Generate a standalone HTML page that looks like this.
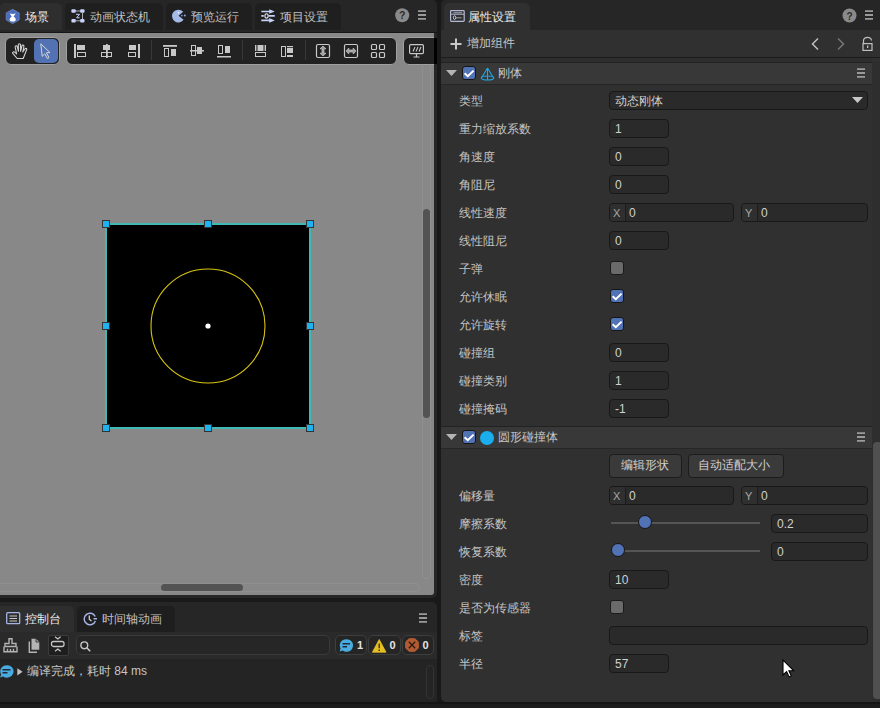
<!DOCTYPE html>
<html><head><meta charset="utf-8">
<style>
*{box-sizing:border-box;margin:0;padding:0}
html,body{width:880px;height:708px;overflow:hidden;background:#191919;font-family:"Liberation Sans",sans-serif;font-size:12px;line-height:14px;color:#c8c8c8}
.a{position:absolute}
svg{position:absolute;overflow:visible}
#lp{left:0;top:0;width:437px;height:598px;background:#262626;border-radius:0 5px 5px 0;overflow:hidden}
.tab{position:absolute;top:3px;height:27px;background:#1f1f1f;border-radius:5px 5px 0 0}
.tab.act{background:#2e2e2e}
.tt{position:absolute;color:#c0c0c0;white-space:nowrap}
.tt.act{color:#ececec}
#scene{left:0;top:33px;width:434px;height:562px;background:#888;border-radius:0 0 3px 0;overflow:hidden}
.tb{position:absolute;top:4px;height:28px;background:#222;border:1px solid #a0a0a0;border-radius:6px}
#cp{left:0;top:602px;width:437px;height:100px;background:#262626;border-radius:0 5px 0 0;overflow:hidden}
#rp{left:441px;top:0;width:439px;height:702px;background:#303030;border-radius:5px 0 0 5px;overflow:hidden}
.lbl{position:absolute;left:18px;color:#c4c4c4;white-space:nowrap}
.inp{position:absolute;background:#2a2a2a;border:1px solid #181818;border-radius:4px}
.val{position:absolute;color:#d0d0d0;white-space:nowrap}
.hdr{position:absolute;left:0;width:431px;height:23px;background:#383838;border-top:1px solid #222;border-bottom:1px solid #262626}
.chk{position:absolute;width:14px;height:14px;background:#5272b6;border:1px solid #151515;border-radius:3px}
.chk0{position:absolute;width:14px;height:14px;background:#6a6a6a;border:1px solid #1a1a1a;border-radius:3px}
.btn{background:#3a3a3a;border:1px solid #1c1c1c;border-radius:4px}
.ax{color:#a8a8a8;font-size:11px}
</style></head><body>
<div class="a" style="left:0;top:702px;width:880px;height:6px;background:#1c1c1c"></div>
<div class="a" style="left:0;top:702px;width:880px;height:2px;background:#151515"></div>
<!-- LEFT SCENE PANEL -->
<div id="lp" class="a">
  <div class="a" style="left:0;top:0;width:437px;height:32px;background:#262626"></div>
  <div class="tab act" style="left:0;width:62px"></div>
  <div class="tab" style="left:65px;width:98px"></div>
  <div class="tab" style="left:166px;width:86px"></div>
  <div class="tab" style="left:255px;width:86px"></div>
  <div class="a" style="left:0;top:32px;width:437px;height:1px;background:#161616"></div>
  <svg style="left:6px;top:8.5px" width="14" height="15"><path d="M6.7 0.3L13.2 3.9V11L6.7 14.6L0.2 11V3.9Z" fill="#4a6cc0" stroke="#8294c8" stroke-width="0.6"/><path d="M3.6 4.6Q6.7 5.2 9.8 4.6L7.6 7.4Q9.8 8.6 9.8 10.5Q9.8 12.6 6.7 12.6Q3.6 12.6 3.6 10.5Q3.6 8.6 5.8 7.4Z" fill="#fff"/></svg>
  <svg style="left:71px;top:9px" width="14" height="14"><g fill="#c8d2fa"><rect x="0.4" y="0.2" width="4.4" height="3.6" rx="1"/><rect x="9.1" y="0.2" width="4.4" height="3.6" rx="1"/><rect x="0.4" y="10" width="4.4" height="3.6" rx="1"/><rect x="9.1" y="10" width="4.4" height="3.6" rx="1"/></g><path d="M4.8 2H9.1M4.8 11.8H9.1M11.5 3.8V10" stroke="#b8bcc8" stroke-width="0.9"/><path d="M5 5.3H8.6L5.6 8.8H8.6" stroke="#c8d2fa" stroke-width="1" fill="none"/></svg>
  <svg style="left:172px;top:9px" width="14" height="14"><path d="M11.2 2.8A6.4 6.4 0 1 0 11.6 10.8L6.6 6.8Z" fill="#a4bae8"/><circle cx="6.5" cy="3.6" r="0.9" fill="#eef"/><circle cx="9.8" cy="6.6" r="0.9" fill="#7898e0"/><circle cx="12.8" cy="6.6" r="1" fill="#90a8e8"/></svg>
  <svg style="left:261px;top:9px" width="14" height="14"><g stroke="#c4d2f8" stroke-width="1.6" fill="none"><path d="M0.3 2.5H9M0.3 11.4H9M7.5 6.9H13.8M0.3 6.9H2.8"/></g><path d="M8.2 0.2L13.8 2.5L8.2 4.8ZM8.2 9.1L13.8 11.4L8.2 13.7Z" fill="#c4d2f8"/><ellipse cx="5.5" cy="6.9" rx="1.6" ry="2.2" fill="none" stroke="#e0e4f0" stroke-width="1.1"/></svg>
  <div class="tt act" style="left:25px;top:10px">场景</div>
  <div class="tt" style="left:90px;top:10px">动画状态机</div>
  <div class="tt" style="left:191px;top:10px">预览运行</div>
  <div class="tt" style="left:280px;top:10px">项目设置</div>
  <svg style="left:395px;top:8px" width="15" height="15"><circle cx="7.2" cy="7.2" r="7" fill="#8a8a8a"/><text x="7.2" y="11.3" font-size="10.5" font-weight="bold" text-anchor="middle" fill="#2a2a2a" font-family="Liberation Sans">?</text></svg>
  <svg style="left:418px;top:10px" width="8" height="10"><path d="M0 1.2H8M0 5H8M0 8.8H8" stroke="#9a9a9a" stroke-width="1.8"/></svg>
  <div class="a" style="left:434px;top:38px;width:3px;height:26px;background:#000"></div>
  <div id="scene" class="a">
    <div class="tb" style="left:5px;width:55px"></div>
    <div class="a" style="left:34px;top:5.5px;width:24.2px;height:24.5px;background:#5272b4;border-radius:5px"></div>
    <!-- hand -->
    <svg style="left:12px;top:10px" width="16" height="16"><path d="M5.2 15.5L0.6 10.2Q0.3 9.3 1.3 8.9Q2.2 8.6 3 9.4L4.6 10.8L3.2 4.2Q3 3 4 2.8Q5 2.7 5.3 3.8L6.5 8.3L6.3 1.8Q6.3 0.7 7.4 0.7Q8.5 0.7 8.5 1.8L8.6 8.3L9.9 2.9Q10.2 1.9 11.2 2.1Q12.1 2.4 11.9 3.5L10.8 9L13 5.8Q13.6 5 14.4 5.5Q15.1 6 14.6 6.9L11.2 15.5Z" fill="none" stroke="#d4d4d4" stroke-width="1.1" stroke-linejoin="round"/></svg>
    <!-- arrow -->
    <svg style="left:40px;top:10px" width="12" height="17"><path d="M0.8 0.8L10 9.6L6.4 9.8L9 14.6L7.4 15.6L4.8 10.8L2.2 13.4Z" fill="none" stroke="#d6d6d6" stroke-width="1" stroke-linejoin="round"/></svg>
    <div class="tb" style="left:66px;width:331px"></div>
    <svg style="left:67px;top:5px" width="329" height="26">
      <g fill="#c8c8c8" stroke="#c8c8c8" stroke-width="1">
      <rect x="7" y="6" width="2" height="14" stroke="none"/>
      <rect x="10" y="7" width="8" height="5" stroke="none"/>
      <rect x="10.5" y="14.5" width="8" height="4" fill="none"/>
      <rect x="39" y="6" width="1.8" height="14" stroke="none"/>
      <rect x="36" y="7" width="7" height="5" stroke="none"/>
      <rect x="34.5" y="14.5" width="10" height="4" fill="none"/>
      <rect x="71" y="6" width="2" height="14" stroke="none"/>
      <rect x="62" y="7" width="7" height="5" stroke="none"/>
      <rect x="61.5" y="14.5" width="7" height="4" fill="none"/>
      <rect x="84" y="2" width="1" height="20" fill="#383838" stroke="none"/>
      <rect x="96" y="7" width="14" height="1.8" stroke="none"/>
      <rect x="97.5" y="10.5" width="4" height="8" fill="none"/>
      <rect x="104" y="11" width="5" height="7" stroke="none"/>
      <rect x="124.5" y="7.5" width="4" height="10" fill="none"/>
      <rect x="130" y="9" width="5" height="7" stroke="none"/>
      <rect x="123" y="12" width="14" height="1.5" stroke="none"/>
      <rect x="151.5" y="7.5" width="4" height="8" fill="none"/>
      <rect x="158" y="8" width="5" height="7" stroke="none"/>
      <rect x="150" y="18" width="14" height="1.5" stroke="none"/>
      <rect x="175" y="2" width="1" height="20" fill="#383838" stroke="none"/>
      <rect x="188" y="7" width="1.4" height="6" stroke="none"/>
      <rect x="197.6" y="7" width="1.4" height="6" stroke="none"/>
      <rect x="190.5" y="7" width="6" height="6" stroke="none"/>
      <rect x="188.5" y="14.5" width="10" height="4" fill="none"/>
      <rect x="214.5" y="8.5" width="4" height="10" fill="none"/>
      <rect x="220" y="8" width="6" height="1.2" stroke="none"/>
      <rect x="220" y="10" width="6" height="5" stroke="none"/>
      <rect x="220" y="17" width="6" height="2" stroke="none"/>
      <rect x="238" y="2" width="1" height="20" fill="#383838" stroke="none"/>
      <rect x="249.5" y="6.5" width="13" height="13" rx="1.5" fill="none" stroke-width="1.2"/>
      <path d="M256 8L259 10.8H257V15.2H259L256 18L253 15.2H255V10.8H253Z" fill="#a0a0a0" stroke-width="0.7" stroke-linejoin="round"/>
      <rect x="277.5" y="6.5" width="13" height="13" rx="1.5" fill="none" stroke-width="1.2"/>
      <path d="M279 13L281.8 10V12H286.2V10L289 13L286.2 16V14H281.8V16Z" fill="#a0a0a0" stroke-width="0.7" stroke-linejoin="round"/>
      <rect x="304.5" y="6.5" width="5" height="5" rx="1" fill="none" stroke-width="1.2"/>
      <rect x="312.5" y="6.5" width="5" height="5" rx="1" fill="none" stroke-width="1.2"/>
      <rect x="304.5" y="14.5" width="5" height="5" rx="1" fill="none" stroke-width="1.2"/>
      <rect x="312.5" y="14.5" width="5" height="5" rx="1" fill="none" stroke-width="1.2"/>
      </g>
    </svg>
    <div class="tb" style="left:403px;width:40px"></div>
    <svg style="left:409px;top:11px" width="15" height="14"><rect x="0.6" y="0.6" width="13.8" height="9" rx="1.2" fill="none" stroke="#c8c8c8" stroke-width="1.2"/><path d="M4 7.5L6 3M7 7.5L9 3M10 7.5L12 3" stroke="#c8c8c8" stroke-width="1.1"/><path d="M7.5 10V12.5M4.5 13H10.5" stroke="#c8c8c8" stroke-width="1.2"/></svg>
    <!-- square -->
    <div class="a" style="left:105px;top:190px;width:206px;height:206px;background:#000;border:2px solid #40b8b4"></div>
    <svg style="left:0;top:0" width="434" height="562">
      <circle cx="208" cy="293" r="57" fill="none" stroke="#d8c410" stroke-width="1.1"/>
      <circle cx="208" cy="293" r="2.6" fill="#fff"/>
      <g fill="#1eb2ee" stroke="#333" stroke-width="1">
        <rect x="102.5" y="187.5" width="7" height="7"/><rect x="204.5" y="187.5" width="7" height="7"/><rect x="306.5" y="187.5" width="7" height="7"/>
        <rect x="102.5" y="289.5" width="7" height="7"/><rect x="306.5" y="289.5" width="7" height="7"/>
        <rect x="102.5" y="391.5" width="7" height="7"/><rect x="204.5" y="391.5" width="7" height="7"/><rect x="306.5" y="391.5" width="7" height="7"/>
      </g>
    </svg>
    <!-- scrollbars -->
    <div class="a" style="left:422px;top:31px;width:9px;height:515px;border:1px solid #909090;border-top:none;border-radius:0 0 4.5px 4.5px"></div>
    <div class="a" style="left:423px;top:176px;width:7px;height:209px;background:#535353;border-radius:3.5px"></div>
    <div class="a" style="left:-10px;top:550px;width:430px;height:9px;border:1px solid #909090;border-radius:0 4.5px 4.5px 0"></div>
    <div class="a" style="left:161px;top:551px;width:82px;height:7px;background:#535353;border-radius:3.5px"></div>
  </div>
</div>
<!-- CONSOLE PANEL -->
<div id="cp" class="a">
  <div class="a" style="left:0;top:3.5px;width:73.5px;height:26.5px;background:#2e2e2e;border-radius:0 5px 0 0"></div>
  <div class="a" style="left:76.7px;top:3.5px;width:98px;height:26.5px;background:#1e1e1e;border-radius:5px 5px 0 0"></div>
  <svg style="left:6px;top:10px" width="15" height="13"><rect x="0.7" y="0.7" width="13" height="11" rx="1" fill="none" stroke="#a4b4e4" stroke-width="1.3"/><path d="M3.5 4H11M3.5 6.5H11M3.5 9H11" stroke="#c8c8c8" stroke-width="1"/></svg>
  <div class="tt act" style="left:25px;top:9.5px">控制台</div>
  <svg style="left:83px;top:10px" width="15" height="14"><path d="M12.2 4.5A5.8 5.8 0 1 0 12.4 9" fill="none" stroke="#a4b4e4" stroke-width="1.5"/><path d="M6.3 3.5V7.2L8.5 9" stroke="#d0d0d0" stroke-width="1.3" fill="none"/><path d="M10.5 6.8H14" stroke="#a4b4e4" stroke-width="1.5"/></svg>
  <div class="tt" style="left:101.5px;top:9.5px">时间轴动画</div>
  <svg style="left:418.5px;top:10.5px" width="8" height="10"><path d="M0 1.2H8M0 5H8M0 8.8H8" stroke="#9a9a9a" stroke-width="1.8"/></svg>
  <!-- toolbar row -->
  <div class="a" style="left:0;top:30px;width:437px;height:26.5px;background:#2a2a2a"></div>
  <svg style="left:3px;top:36px" width="15" height="15"><g fill="none" stroke="#b4b4b4" stroke-width="1.4"><path d="M6 0.7H9V5.5H13V8.5H2V5.5H6Z"/><path d="M1 8.5V13.8H14V8.5M4.5 10.8V13.8M10.5 10.8V13.8M7.5 11V13.8"/></g></svg>
  <svg style="left:28px;top:36px" width="12" height="15"><path d="M3.5 0.7H8L11.3 4V11.8H3.5Z" fill="#b4b4b4"/><path d="M8 0.7V4H11.3" fill="none" stroke="#2a2a2a" stroke-width="0.9"/><path d="M1.3 3.5V14.2H9" fill="none" stroke="#b4b4b4" stroke-width="1.4"/></svg>
  <div class="a" style="left:47.5px;top:32.5px;width:21px;height:21px;background:#1e1e1e;border:1px solid #3c3c3c;border-radius:2px"></div>
  <svg style="left:49px;top:34px" width="18" height="18"><g fill="none" stroke="#c4c4c4" stroke-width="1.3"><path d="M6 0.8L8.8 3L11.6 0.8"/><rect x="2.5" y="5.5" width="12.5" height="5" rx="2"/><path d="M6 15.2L8.8 13L11.6 15.2"/></g></svg>
  <div class="a" style="left:76px;top:33px;width:254px;height:20px;background:#262626;border:1px solid #3a3a3a;border-radius:5px"></div>
  <svg style="left:80px;top:38.5px" width="11" height="11"><circle cx="4.3" cy="4.3" r="3.4" fill="none" stroke="#c8c8c8" stroke-width="1.4"/><path d="M6.8 6.8L10.2 10.2" stroke="#c8c8c8" stroke-width="1.6"/></svg>
  <div class="a" style="left:335.25px;top:33.25px;width:32px;height:19.25px;background:#252525;border:1px solid #3e3e3e;border-radius:5px"></div>
  <div class="a" style="left:368px;top:33.25px;width:32.5px;height:19.25px;background:#252525;border:1px solid #3e3e3e;border-radius:5px"></div>
  <div class="a" style="left:401.5px;top:33.25px;width:32.5px;height:19.25px;background:#252525;border:1px solid #3e3e3e;border-radius:5px"></div>
  <svg style="left:339px;top:36.5px" width="15" height="13"><path d="M7.2 0.2A6.5 6.3 0 1 1 3.6 11.5L0.6 12.6L1.6 9.6A6.5 6.3 0 0 1 7.2 0.2Z" fill="#48ace0"/><path d="M3.5 4.8H11M3.5 7.8H8" stroke="#1e2a38" stroke-width="1.5"/></svg>
  <div class="a" style="left:357px;top:36px;color:#e4e4e4;font-weight:bold;font-size:11px">1</div>
  <svg style="left:371.5px;top:37px" width="15" height="14"><path d="M7.2 0.5L14 13.2H0.4Z" fill="#e6bf22" stroke="#e6bf22" stroke-width="0.8" stroke-linejoin="round"/><path d="M7.2 4.5V9.2M7.2 10.6V12" stroke="#3a2e10" stroke-width="1.4"/></svg>
  <div class="a" style="left:389.5px;top:36px;color:#e4e4e4;font-weight:bold;font-size:11px">0</div>
  <svg style="left:405px;top:35.75px" width="14" height="14"><path d="M4.1 0.2H9.9L13.8 4.1V9.9L9.9 13.8H4.1L0.2 9.9V4.1Z" fill="#b25a32"/><circle cx="7" cy="7" r="6.8" fill="#b25a32"/><path d="M3.8 3.8L10.2 10.2M10.2 3.8L3.8 10.2" stroke="#2a1a10" stroke-width="1.3"/></svg>
  <div class="a" style="left:422.5px;top:36px;color:#e4e4e4;font-weight:bold;font-size:11px">0</div>
  <!-- log area -->
  <div class="a" style="left:0;top:56.5px;width:437px;height:43.5px;background:#242424"></div>
  <svg style="left:0;top:63px" width="14" height="13"><path d="M6.8 0.2A6.5 6.2 0 1 1 3.2 11.4L0 12.6L1.2 9.6A6.5 6.2 0 0 1 6.8 0.2Z" fill="#48ace0"/><path d="M2.5 4.8H10.5M2.5 7.8H7.5" stroke="#1e2a38" stroke-width="1.5"/></svg>
  <svg style="left:17px;top:65.5px" width="6" height="8"><path d="M0.3 0.3L5.6 3.8L0.3 7.4Z" fill="#c0c0c0"/></svg>
  <div class="val" style="left:27px;top:61.5px;color:#c4c4c4">编译完成，耗时 84 ms</div>
  <div class="a" style="left:425.5px;top:62.5px;width:8.5px;height:34.5px;border:1px solid #333;border-radius:4px"></div>
</div>
<!-- RIGHT PANEL -->
<div id="rp" class="a">
  <div class="a" style="left:0;top:0;width:439px;height:30px;background:#262626"></div>
  <div class="a" style="left:3px;top:3px;width:86px;height:27px;background:#303030;border-radius:5px 5px 0 0"></div>
  <svg style="left:9px;top:10px" width="15" height="12"><rect x="0.6" y="0.6" width="13.6" height="10.8" rx="0.8" fill="none" stroke="#b4bad6" stroke-width="1.2"/><path d="M3.5 2.6H12" stroke="#8a8a9a" stroke-width="1.2"/><path d="M1 4.2H14" stroke="#b4bad6" stroke-width="1"/><ellipse cx="4.6" cy="7.6" rx="1.2" ry="1.9" fill="none" stroke="#c0c8f0" stroke-width="1"/><path d="M6 7.8H11.5" stroke="#b0b0b0" stroke-width="0.9"/></svg>
  <div class="tt act" style="left:27px;top:10px">属性设置</div>
  <svg style="left:401px;top:8px" width="15" height="15"><circle cx="7.5" cy="7.5" r="7" fill="#8a8a8a"/><text x="7.5" y="11.5" font-size="10" font-weight="bold" text-anchor="middle" fill="#2a2a2a" font-family="Liberation Sans">?</text></svg>
  <svg style="left:424px;top:10px" width="8" height="10"><path d="M0 1.2H8M0 5H8M0 8.8H8" stroke="#9a9a9a" stroke-width="1.8"/></svg>
  <!-- add component row -->
  <svg style="left:9px;top:38px" width="12" height="12"><path d="M6 0.5V11.5M0.5 6H11.5" stroke="#c8c8c8" stroke-width="2"/></svg>
  <div class="val" style="left:26px;top:36px;color:#c4c4c4">增加组件</div>
  <svg style="left:370px;top:38px" width="8" height="12"><path d="M7 0.5L1.5 6L7 11.5" stroke="#c0c0c0" stroke-width="1.5" fill="none"/></svg>
  <svg style="left:396px;top:38px" width="8" height="12"><path d="M1 0.5L6.5 6L1 11.5" stroke="#777" stroke-width="1.5" fill="none"/></svg>
  <svg style="left:421px;top:37px" width="11" height="14"><path d="M1.5 6.5V3.5A4 3.2 0 0 1 9.5 3.5" stroke="#c0c0c0" stroke-width="1.2" fill="none"/><rect x="1" y="6.6" width="9" height="6.8" fill="none" stroke="#c0c0c0" stroke-width="1.2"/><rect x="5" y="8.5" width="1.3" height="2.5" fill="#c0c0c0"/></svg>
  <div class="a" style="left:0;top:57px;width:439px;height:1px;background:#1c1c1c"></div>
  <div class="a" style="left:0;top:58px;width:431px;height:4px;background:#2e2e2e"></div>
  <!-- scrollbar -->
  <div class="a" style="left:431px;top:61px;width:10px;height:650px;background:#2e2e2e;border-radius:5px"></div>
  <div class="a" style="left:432px;top:442px;width:9px;height:257px;background:#505050;border-radius:4px"></div>
  <!-- header 1 -->
  <div class="hdr" style="top:62px"></div>
  <svg style="left:5px;top:70px" width="11" height="6"><path d="M0 0H11L5.5 6Z" fill="#b4b4b4"/></svg>
  <div class="chk" style="left:20.5px;top:65.5px"><svg style="left:0;top:0" width="12" height="12"><path d="M1.6 6.2L4.8 9.2L10.6 3.6" stroke="#fff" stroke-width="2" fill="none"/></svg></div>
  <svg style="left:39px;top:67px" width="14" height="14"><path d="M7.5 1L1.3 11.2M7.5 1L13.7 11.2M7.5 1V13" stroke="#1ea8e6" stroke-width="1.1" fill="none"/><ellipse cx="7.5" cy="11" rx="6.3" ry="2" stroke="#1ea8e6" stroke-width="1.1" fill="none"/></svg>
  <div class="val" style="left:57px;top:66px;color:#c8c8c8">刚体</div>
  <svg style="left:416px;top:68px" width="8" height="10"><path d="M0 1.2H8M0 5H8M0 8.8H8" stroke="#9a9a9a" stroke-width="1.8"/></svg>
  <!-- header 2 -->
  <div class="hdr" style="top:426px"></div>
  <svg style="left:5px;top:434px" width="11" height="6"><path d="M0 0H11L5.5 6Z" fill="#b4b4b4"/></svg>
  <div class="chk" style="left:20.5px;top:429.5px"><svg style="left:0;top:0" width="12" height="12"><path d="M1.6 6.2L4.8 9.2L10.6 3.6" stroke="#fff" stroke-width="2" fill="none"/></svg></div>
  <div class="a" style="left:39px;top:431px;width:14px;height:14px;border-radius:50%;background:#1aaeef"></div>
  <div class="val" style="left:57px;top:430px;color:#c8c8c8">圆形碰撞体</div>
  <svg style="left:416px;top:432px" width="8" height="10"><path d="M0 1.2H8M0 5H8M0 8.8H8" stroke="#9a9a9a" stroke-width="1.8"/></svg>
  <!-- buttons -->
  <div class="a btn" style="left:168px;top:453.5px;width:73px;height:24px"></div>
  <div class="val" style="left:180px;top:458px">编辑形状</div>
  <div class="a btn" style="left:246.5px;top:453.5px;width:96px;height:24px"></div>
  <div class="val" style="left:256.5px;top:458px">自动适配大小</div>
<div class="lbl" style="top:94px">类型</div>
<div class="inp" style="left:168px;top:91px;width:259px;height:19px"></div>
<div class="val" style="left:174px;top:94px">动态刚体</div>
<svg style="left:411px;top:97px" width="11" height="6"><path d="M0 0H11L5.5 6Z" fill="#c8c8c8"/></svg>
<div class="lbl" style="top:122px">重力缩放系数</div>
<div class="inp" style="left:168px;top:119px;width:60px;height:19px"></div>
<div class="val" style="left:174px;top:122px">1</div>
<div class="lbl" style="top:150px">角速度</div>
<div class="inp" style="left:168px;top:147px;width:60px;height:19px"></div>
<div class="val" style="left:174px;top:150px">0</div>
<div class="lbl" style="top:178px">角阻尼</div>
<div class="inp" style="left:168px;top:175px;width:60px;height:19px"></div>
<div class="val" style="left:174px;top:178px">0</div>
<div class="lbl" style="top:206px">线性速度</div>
<div class="inp" style="left:168px;top:203px;width:125px;height:19px;overflow:hidden"><div class="a" style="left:0;top:0;width:16px;height:17px;background:#2f2f2f;border-right:1px solid #1c1c1c"></div></div>
<div class="val ax" style="left:172px;top:206px">X</div>
<div class="val" style="left:188px;top:206px">0</div>
<div class="inp" style="left:300px;top:203px;width:127px;height:19px;overflow:hidden"><div class="a" style="left:0;top:0;width:16px;height:17px;background:#2f2f2f;border-right:1px solid #1c1c1c"></div></div>
<div class="val ax" style="left:304px;top:206px">Y</div>
<div class="val" style="left:320px;top:206px">0</div>
<div class="lbl" style="top:234px">线性阻尼</div>
<div class="inp" style="left:168px;top:231px;width:60px;height:19px"></div>
<div class="val" style="left:174px;top:234px">0</div>
<div class="lbl" style="top:262px">子弹</div>
<div class="chk0" style="left:168.5px;top:261px"></div>
<div class="lbl" style="top:290px">允许休眠</div>
<div class="chk" style="left:168.5px;top:289px"><svg style="left:0;top:0" width="12" height="12"><path d="M1.6 6.2L4.8 9.2L10.6 3.6" stroke="#fff" stroke-width="2" fill="none"/></svg></div>
<div class="lbl" style="top:318px">允许旋转</div>
<div class="chk" style="left:168.5px;top:317px"><svg style="left:0;top:0" width="12" height="12"><path d="M1.6 6.2L4.8 9.2L10.6 3.6" stroke="#fff" stroke-width="2" fill="none"/></svg></div>
<div class="lbl" style="top:346px">碰撞组</div>
<div class="inp" style="left:168px;top:343px;width:60px;height:19px"></div>
<div class="val" style="left:174px;top:346px">0</div>
<div class="lbl" style="top:374px">碰撞类别</div>
<div class="inp" style="left:168px;top:371px;width:60px;height:19px"></div>
<div class="val" style="left:174px;top:374px">1</div>
<div class="lbl" style="top:402px">碰撞掩码</div>
<div class="inp" style="left:168px;top:399px;width:60px;height:19px"></div>
<div class="val" style="left:174px;top:402px">-1</div>
<div class="lbl" style="top:489px">偏移量</div>
<div class="inp" style="left:168px;top:486px;width:125px;height:19px;overflow:hidden"><div class="a" style="left:0;top:0;width:16px;height:17px;background:#2f2f2f;border-right:1px solid #1c1c1c"></div></div>
<div class="val ax" style="left:172px;top:489px">X</div>
<div class="val" style="left:188px;top:489px">0</div>
<div class="inp" style="left:300px;top:486px;width:127px;height:19px;overflow:hidden"><div class="a" style="left:0;top:0;width:16px;height:17px;background:#2f2f2f;border-right:1px solid #1c1c1c"></div></div>
<div class="val ax" style="left:304px;top:489px">Y</div>
<div class="val" style="left:320px;top:489px">0</div>
<div class="lbl" style="top:517px">摩擦系数</div>
<div class="a" style="left:170px;top:522px;width:149px;height:2px;background:#555"></div>
<div class="a" style="left:197px;top:515px;width:14px;height:14px;border-radius:50%;background:#5272b6;border:1.3px solid #161616"></div>
<div class="inp" style="left:330px;top:514px;width:97px;height:19px"></div>
<div class="val" style="left:336px;top:517px">0.2</div>
<div class="lbl" style="top:545px">恢复系数</div>
<div class="a" style="left:170px;top:550px;width:149px;height:2px;background:#555"></div>
<div class="a" style="left:170px;top:543px;width:14px;height:14px;border-radius:50%;background:#5272b6;border:1.3px solid #161616"></div>
<div class="inp" style="left:330px;top:542px;width:97px;height:19px"></div>
<div class="val" style="left:336px;top:545px">0</div>
<div class="lbl" style="top:573px">密度</div>
<div class="inp" style="left:168px;top:570px;width:60px;height:19px"></div>
<div class="val" style="left:174px;top:573px">10</div>
<div class="lbl" style="top:601px">是否为传感器</div>
<div class="chk0" style="left:168.5px;top:600px"></div>
<div class="lbl" style="top:629px">标签</div>
<div class="inp" style="left:168px;top:626px;width:259px;height:19px"></div>
<div class="lbl" style="top:657px">半径</div>
<div class="inp" style="left:168px;top:654px;width:60px;height:19px"></div>
<div class="val" style="left:174px;top:657px">57</div>
</div>

<svg style="left:781.5px;top:658.5px" width="14" height="21"><path d="M1 1V16L4.6 12.6L7.1 17.9L9.3 17L6.9 11.7H11.6Z" fill="#fff" stroke="#000" stroke-width="1.1" stroke-linejoin="miter"/></svg>
</body></html>
